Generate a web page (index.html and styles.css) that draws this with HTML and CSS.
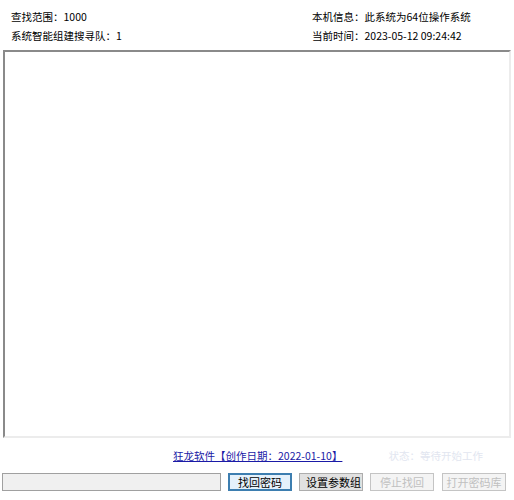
FILE: index.html
```html
<!DOCTYPE html>
<html lang="zh-CN">
<head>
    <meta charset="UTF-8">
    <title>找回密码</title>
    <link rel="stylesheet" href="styles.css">
</head>
<body>
    <div class="window">
        <div class="info">
            <div class="info-col">
                <div class="info-line">查找范围：1000</div>
                <div class="info-line">系统智能组建搜寻队：1</div>
            </div>
            <div class="info-col">
                <div class="info-line">本机信息：此系统为64位操作系统</div>
                <div class="info-line">当前时间：2023-05-12 09:24:42</div>
            </div>
        </div>
        <div class="result-box"></div>
        <div class="link-row">
            <a class="author-link" href="#">狂龙软件【创作日期：2022-01-10】</a>
            <span class="status-text">状态：等待开始工作</span>
        </div>
        <div class="action-row">
            <input type="text" class="path-input">
            <button type="button" class="btn btn-focus">找回密码</button>
            <button type="button" class="btn btn-clip">设置参数组</button>
            <button type="button" class="btn" disabled>停止找回</button>
            <button type="button" class="btn" disabled>打开密码库</button>
        </div>
    </div>
</body>
</html>
```

FILE: styles.css
```css
body {
    margin: 0;
    padding: 0;
    background-color: #fff;
    font-family: "Noto Sans CJK SC", "DejaVu Sans", sans-serif;
    font-size: 10.5px;
    color: #000;
}
.window {
    width: 514px;
    height: 500px;
}
.info {
    display: grid;
    grid-template-columns: 301px 1fr;
    padding: 7px 0 0 11px;
}
.info-line {
    height: 19px;
    line-height: 19px;
    white-space: nowrap;
}
.result-box {
    margin: 5px 3px 0 3px;
    height: 384px;
    border-top: 2px solid #8a8a8a;
    border-left: 2px solid #8a8a8a;
    border-right: 2px solid #ececec;
    border-bottom: 2px solid #ececec;
    background: #fff;
}
.link-row {
    display: flex;
    align-items: center;
    height: 18px;
    margin-top: 8px;
}
.author-link {
    margin-left: 173px;
    color: #1a1aa6;
    text-decoration: underline;
    white-space: nowrap;
}
.status-text {
    margin-left: 46px;
    color: #e2e6f0;
    white-space: nowrap;
}
.action-row {
    display: flex;
    align-items: center;
    margin-top: 9px;
    padding-left: 2px;
    gap: 7px;
}
.path-input {
    box-sizing: border-box;
    width: 219px;
    height: 18px;
    margin: 0;
    padding: 0 3px;
    border: 1px solid #a0a0a0;
    background: #f0f0f0;
}
.btn {
    box-sizing: border-box;
    width: 64px;
    height: 18px;
    margin: 0;
    padding: 0;
    font-family: inherit;
    font-size: 11px;
    line-height: 14px;
    color: #000;
    background: #e1e1e1;
    border: 1px solid #adadad;
    white-space: nowrap;
    overflow: hidden;
}
.btn-focus {
    background: #e5f1fb;
    border: 2px solid #3d7eb0;
}
.btn-clip {
    text-align: left;
    padding-left: 6px;
}
.btn:disabled {
    background: #f4f4f4;
    border-color: #c4c4c4;
    color: #c0c0c0;
}
.btn:last-child {
    margin-left: 1px;
}
```
